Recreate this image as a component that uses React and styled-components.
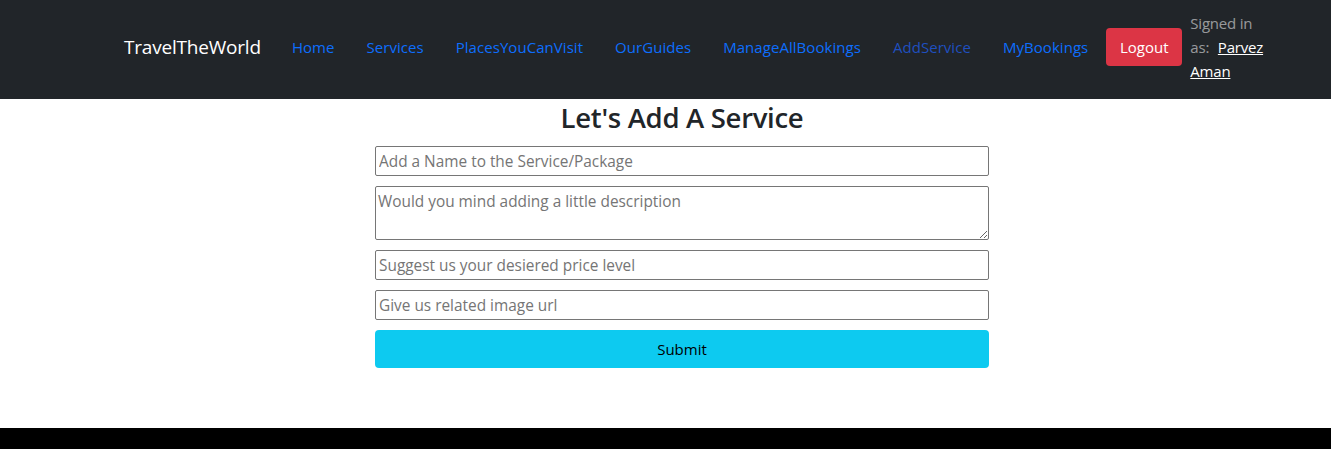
import React from "react";
import styled, { createGlobalStyle } from "styled-components";

const GlobalStyle = createGlobalStyle`
  * { box-sizing: border-box; }
  body {
    margin: 0;
    background: #fff;
    font-family: "Open Sans", "Noto Sans", sans-serif;
    color: #212529;
  }
`;

const links = [
  { label: "Home" },
  { label: "Services" },
  { label: "PlacesYouCanVisit" },
  { label: "OurGuides" },
  { label: "ManageAllBookings" },
  { label: "AddService", active: true },
  { label: "MyBookings" },
];

const Page = styled.div`
  min-height: 449px;
  display: flex;
  flex-direction: column;
`;

const NavBar = styled.nav`
  height: 99px;
  background: #212529;
  display: flex;
  align-items: center;
  padding-left: 124px;
  padding-bottom: 5px;
`;

const Brand = styled.a`
  color: #fff;
  font-size: 19px;
  margin-right: 15px;
  white-space: nowrap;
  letter-spacing: -0.2px;
`;

const NavLinks = styled.div`
  display: flex;
  align-items: center;
`;

const NavLink = styled.a`
  color: ${(p) => (p.$active ? "#1f4fbf" : "#0d6efd")};
  font-size: 15px;
  padding: 8px 16px;
  white-space: nowrap;
  letter-spacing: 0.05px;
`;

const LogoutButton = styled.button`
  background: #dc3545;
  color: #fff;
  border: none;
  border-radius: 4px;
  height: 38px;
  width: 76px;
  font-family: inherit;
  font-size: 15px;
  margin-left: 2px;
  margin-right: 8px;
`;

const SignedIn = styled.div`
  width: 80px;
  color: rgba(255, 255, 255, 0.55);
  font-size: 15px;
  line-height: 24px;
  letter-spacing: -0.2px;

  a {
    color: #fff;
    text-decoration: underline;
    margin-left: 5px;
  }
`;

const Main = styled.main`
  flex: 1;
  display: flex;
  flex-direction: column;
  align-items: center;
  padding-left: 33px;
  padding-top: 2px;
`;

const Title = styled.h2`
  margin: 0 0 12px;
  font-size: 27.5px;
  font-weight: 600;
  line-height: 1.2;
  color: #212529;
  letter-spacing: -0.3px;
`;

const Form = styled.form`
  width: 614px;
  display: flex;
  flex-direction: column;
  gap: 10px;
`;

const Input = styled.input`
  height: 30px;
  border: 1px solid #767676;
  border-radius: 2px;
  padding: 1px 3px;
  font-family: inherit;
  font-size: 15.4px;
  &::placeholder {
    color: #757575;
  }
`;

const TextArea = styled.textarea`
  height: 54px;
  border: 1px solid #767676;
  border-radius: 2px;
  padding: 4px 2px;
  font-family: inherit;
  font-size: 15.4px;
  resize: vertical;
  &::placeholder {
    color: #757575;
  }
`;

const SubmitButton = styled.button`
  height: 38px;
  background: #0dcaf0;
  border: none;
  border-radius: 4px;
  color: #000;
  font-family: inherit;
  font-size: 15px;
`;

const Footer = styled.footer`
  height: 21px;
  background: #000;
`;

export default function App() {
  return (
    <Page>
      <GlobalStyle />
      <NavBar>
        <Brand>TravelTheWorld</Brand>
        <NavLinks>
          {links.map((l) => (
            <NavLink key={l.label} $active={l.active}>
              {l.label}
            </NavLink>
          ))}
        </NavLinks>
        <LogoutButton>Logout</LogoutButton>
        <SignedIn>
          Signed in as: <a>Parvez Aman</a>
        </SignedIn>
      </NavBar>
      <Main>
        <Title>Let's Add A Service</Title>
        <Form onSubmit={(e) => e.preventDefault()}>
          <Input placeholder="Add a Name to the Service/Package" />
          <TextArea placeholder="Would you mind adding a little description" />
          <Input placeholder="Suggest us your desiered price level" />
          <Input placeholder="Give us related image url" />
          <SubmitButton type="submit">Submit</SubmitButton>
        </Form>
      </Main>
      <Footer />
    </Page>
  );
}
